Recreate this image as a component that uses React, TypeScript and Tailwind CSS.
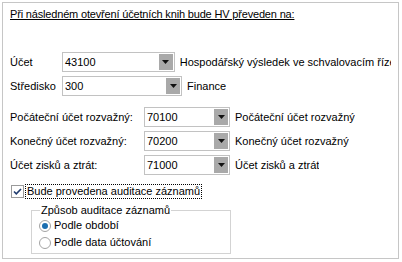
const font = { fontFamily: '"Liberation Sans", Arial, sans-serif' };

const Combo = ({ value, width }: { value: string; width: string }) => (
  <div className={`${width} h-[20px] border border-[#c2c2c2] bg-white flex items-stretch`}>
    <div className="flex-1 pl-[2px] leading-[18px] text-black">{value}</div>
    <div className="w-[14px] my-[1px] mr-[1px] bg-[#a9a9a9] flex items-center justify-center">
      <svg width="7" height="4" viewBox="0 0 7 4">
        <path d="M0 0h7L3.5 4z" fill="#111" />
      </svg>
    </div>
  </div>
);

const Row = ({
  label,
  value,
  desc,
  labelW,
  boxW,
  className = "",
}: {
  label: string;
  value: string;
  desc: string;
  labelW: string;
  boxW: string;
  className?: string;
}) => (
  <div className={`flex items-center h-[20px] ${className}`}>
    <div className={`${labelW} shrink-0`}>{label}</div>
    <Combo value={value} width={boxW} />
    <div className="ml-[5px] whitespace-nowrap overflow-hidden">{desc}</div>
  </div>
);

const Radio = ({ checked, label }: { checked?: boolean; label: string }) => (
  <div className="flex items-center h-[17px]">
    <svg width="12" height="12" viewBox="0 0 12 12" className="shrink-0">
      <circle cx="6" cy="6" r="5.5" fill="#fff" stroke="#a3a3a3" />
      {checked && <circle cx="6" cy="6" r="3" fill="#1b6eb0" />}
    </svg>
    <span className="ml-[3px]">{label}</span>
  </div>
);

export default function App() {
  return (
    <div className="w-[402px] h-[262px] bg-white pt-[2px] pl-[2px] text-[11px] leading-[13px] text-black" style={font}>
      <div className="w-[397px] h-[257px] border border-[#c6c6c6] overflow-hidden">
        <div className="pl-[7px] pt-[5px]">
          <span className="underline tracking-[-0.17px]">Při následném otevření účetních knih bude HV převeden na:</span>
        </div>

        <div className="pl-[7px] pr-[7px] mt-[31px] flex flex-col">
          <Row
            label="Účet"
            value="43100"
            desc="Hospodářský výsledek ve schvalovacím řízení"
            labelW="w-[52px]"
            boxW="w-[120px]"
          />
          <Row
            label="Středisko"
            value="300"
            desc="Finance"
            labelW="w-[52px]"
            boxW="w-[120px]"
            className="mt-[4px]"
          />
          <Row
            label="Počáteční účet rozvažný:"
            value="70100"
            desc="Počáteční účet rozvažný"
            labelW="w-[134px]"
            boxW="w-[86px]"
            className="mt-[11px]"
          />
          <Row
            label="Konečný účet rozvažný:"
            value="70200"
            desc="Konečný účet rozvažný"
            labelW="w-[134px]"
            boxW="w-[86px]"
            className="mt-[4px]"
          />
          <Row
            label="Účet zisků a ztrát:"
            value="71000"
            desc="Účet zisků a ztrát"
            labelW="w-[134px]"
            boxW="w-[86px]"
            className="mt-[4px]"
          />
        </div>

        <div className="ml-[8px] mt-[9px] flex items-center h-[15px]">
          <svg width="13" height="13" viewBox="0 0 13 13" className="shrink-0">
            <rect x="0.5" y="0.5" width="12" height="12" fill="#fff" stroke="#9a9a9a" />
            <path d="M3 6.5l2.3 2.3L10 4" fill="none" stroke="#1f3b6e" strokeWidth="1.6" />
          </svg>
          <span className="ml-[1px] px-[1px] border border-dotted border-black leading-[13px]">
            Bude provedena auditace záznamů
          </span>
        </div>

        <fieldset className="ml-[28px] mt-[5px] w-[200px] border border-[#d3d3d3] pl-[7px] pb-[2px]">
          <legend className="ml-[1px] px-[1px]">Způsob auditace záznamů</legend>
          <Radio checked label="Podle období" />
          <Radio label="Podle data účtování" />
        </fieldset>
      </div>
    </div>
  );
}
